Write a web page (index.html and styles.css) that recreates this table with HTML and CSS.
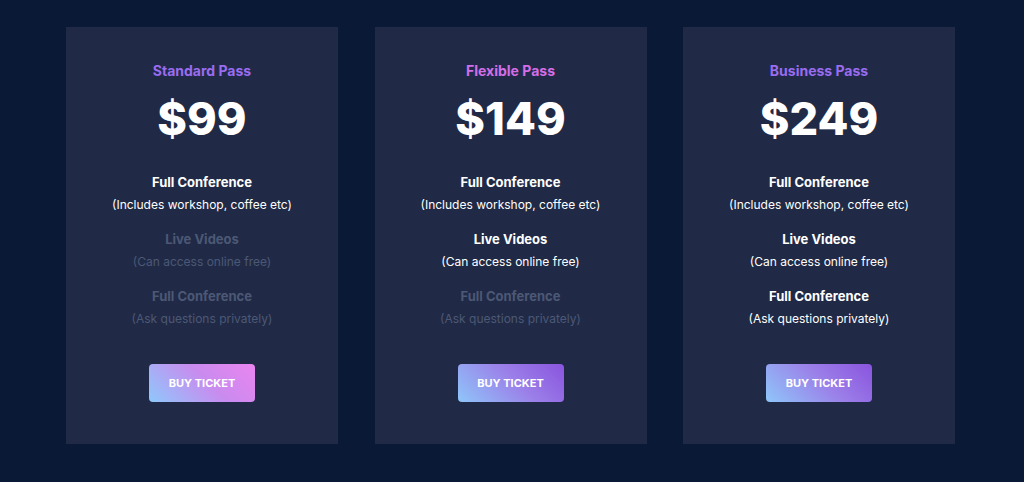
FILE: index.html
```html
<!DOCTYPE html>
<html lang="en">
<head>
<meta charset="UTF-8">
<meta name="viewport" content="width=device-width, initial-scale=1.0">
<title>Tickets</title>
<link rel="stylesheet" href="styles.css">
</head>
<body>
    <div class="pricing">
        <div class="card">
            <h3 class="plan purple">Standard Pass</h3>
            <div class="price">$99</div>
            <ul class="features">
                <li><strong>Full Conference</strong><span>(Includes workshop, coffee etc)</span></li>
                <li class="off"><strong>Live Videos</strong><span>(Can access online free)</span></li>
                <li class="off"><strong>Full Conference</strong><span>(Ask questions privately)</span></li>
            </ul>
            <button class="btn pink">BUY TICKET</button>
        </div>
        <div class="card">
            <h3 class="plan pinkish">Flexible Pass</h3>
            <div class="price">$149</div>
            <ul class="features">
                <li><strong>Full Conference</strong><span>(Includes workshop, coffee etc)</span></li>
                <li><strong>Live Videos</strong><span>(Can access online free)</span></li>
                <li class="off"><strong>Full Conference</strong><span>(Ask questions privately)</span></li>
            </ul>
            <button class="btn violet">BUY TICKET</button>
        </div>
        <div class="card">
            <h3 class="plan purple">Business Pass</h3>
            <div class="price">$249</div>
            <ul class="features">
                <li><strong>Full Conference</strong><span>(Includes workshop, coffee etc)</span></li>
                <li><strong>Live Videos</strong><span>(Can access online free)</span></li>
                <li><strong>Full Conference</strong><span>(Ask questions privately)</span></li>
            </ul>
            <button class="btn violet">BUY TICKET</button>
        </div>
    </div>
</body>
</html>
```

FILE: styles.css
```css
body {
    font-family: "Inter", "Noto Sans", sans-serif;
    margin: 0;
    padding: 0;
    background-color: #0a1a36;
    color: #fff;
}
.pricing {
    display: flex;
    gap: 36.5px;
    padding-top: 27px;
    padding-left: 66px;
}
.card {
    width: 272px;
    height: 417px;
    background-color: #202a46;
    display: flex;
    flex-direction: column;
    align-items: center;
    box-sizing: border-box;
    padding-top: 35px;
}
.plan {
    margin: 0;
    font-size: 14px;
    font-weight: 700;
    line-height: 18px;
}
.purple {
    color: #9a6cf0;
}
.pinkish {
    color: #d46ee8;
}
.price {
    margin-top: 9px;
    font-size: 45px;
    font-weight: 800;
    line-height: 60px;
}
.features {
    list-style: none;
    margin: 22px 0 0;
    padding: 0;
    text-align: center;
}
.features li {
    display: flex;
    flex-direction: column;
    align-items: center;
    margin-bottom: 12px;
}
.features strong {
    font-size: 13px;
    font-weight: 700;
    line-height: 22px;
}
.features span {
    margin-top: 1px;
    font-size: 12px;
    line-height: 22px;
}
.features li.off {
    color: #4c5875;
}
.btn {
    margin-top: 22px;
    width: 106px;
    height: 38px;
    border: none;
    border-radius: 4px;
    color: #fff;
    font-family: inherit;
    font-size: 11px;
    font-weight: 700;
    cursor: pointer;
}
.btn.pink {
    background: linear-gradient(45deg, #8ec8fb 0%, #c98bef 55%, #ea85f0 100%);
}
.btn.violet {
    background: linear-gradient(45deg, #8fc6fa 0%, #9b7fe8 55%, #8a54df 100%);
}
```
